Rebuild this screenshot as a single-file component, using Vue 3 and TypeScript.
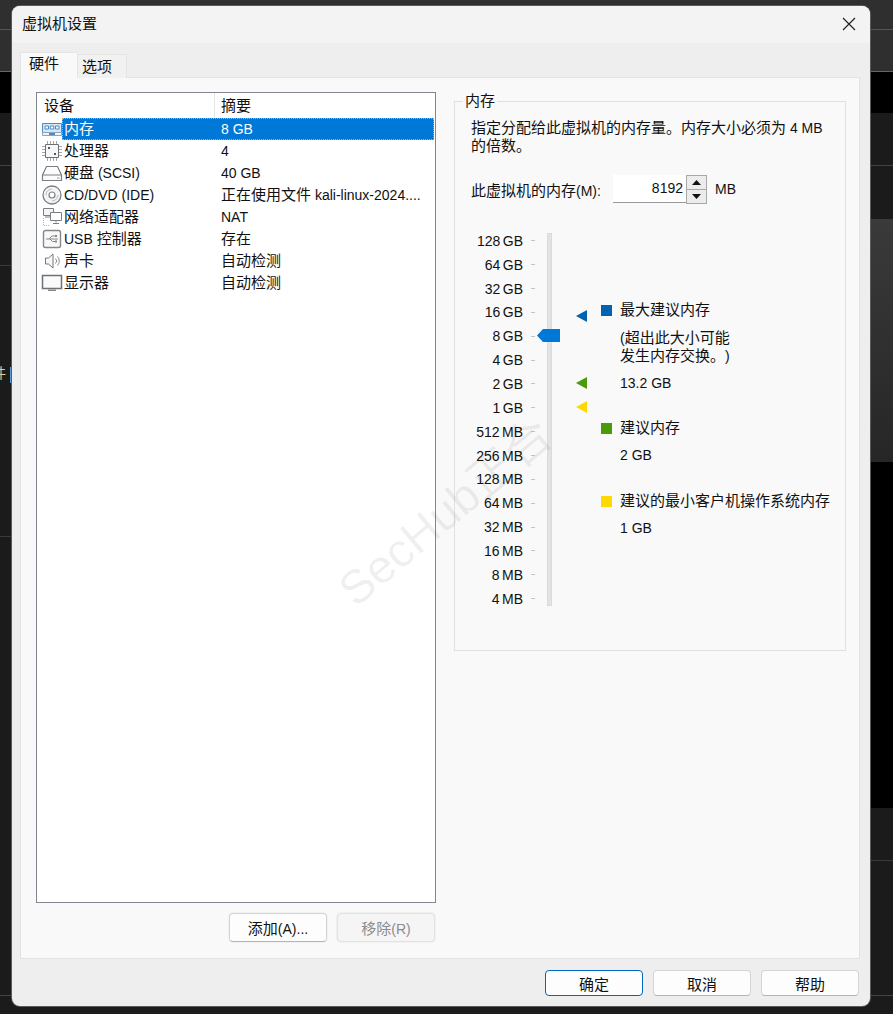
<script setup lang="ts">
import { h, type FunctionalComponent } from 'vue'

interface Shape { d: string; s?: string; f?: string; w?: number; dash?: string }
interface Device { name: string; summary: string; icon: Shape[] }

/* CJK runs are one pixel larger than the Latin runs around them, as in the native dialog font. */
const T: FunctionalComponent<{ t: string }> = (p) =>
  p.t.split(/([\u2e80-\u9fff\uff00-\uffef]+)/).filter(Boolean).map((run) =>
    /[\u2e80-\u9fff\uff00-\uffef]/.test(run) ? h('span', { class: 'cjk' }, run) : run
  )
T.props = ['t']

const g = '#7b7f83'
const devices: Device[] = [
  { name: '内存', summary: '8 GB', icon: [
    { d: 'M1.5 5.5h19v9h-19z', s: '#4f8cc4', f: '#d5e6f5' },
    { d: 'M4 8h3.5v3H4zM9.2 8h3.5v3H9.2zM14.5 8h3.5v3h-3.5z', s: '#4f8cc4', f: '#fff' },
    { d: 'M1.5 14.5h19v3h-19z', s: '#8aa6bd', f: '#eef3f7' },
    { d: 'M8 15h6v2H8z', f: '#4f8cc4' }
  ] },
  { name: '处理器', summary: '4', icon: [
    { d: 'M4.5 4.5h13v13h-13z', s: '#6d7073', f: '#f7f7f7' },
    { d: 'M1 6.5h3M1 9.5h3M1 12.5h3M1 15.5h3M18 6.5h3M18 9.5h3M18 12.5h3M18 15.5h3M6.5 1v3M9.5 1v3M12.5 1v3M15.5 1v3M6.5 18v3M9.5 18v3M12.5 18v3M15.5 18v3', s: '#a4a7aa' },
    { d: 'M7 7h2v2H7zM13 13h2v2h-2z', f: '#55585b' }
  ] },
  { name: '硬盘 (SCSI)', summary: '40 GB', icon: [
    { d: 'M5.5 4.5h11l4 8.500v5.500h-19V13z', s: g, f: '#fbfbfb', w: 1.2 },
    { d: 'M1.5 13h19', s: g, w: 1.2 },
    { d: 'M16 16h2.5', s: '#9a9da0' }
  ] },
  { name: 'CD/DVD (IDE)', summary: '正在使用文件 kali-linux-2024....', icon: [
    { d: 'M11 2a9 9 0 1 0 0 18a9 9 0 1 0 0-18z', s: g, f: '#f4f4f4', w: 1.3 },
    { d: 'M11 8a3 3 0 1 0 0 6a3 3 0 1 0 0-6z', s: g, f: '#fff', w: 1.2 },
    { d: 'M5 11a6 6 0 0 1 6-6', s: '#b9bcbf' },
    { d: 'M17 11a6 6 0 0 1-6 6', s: '#b9bcbf' }
  ] },
  { name: '网络适配器', summary: 'NAT', icon: [
    { d: 'M2.5 2.5h10v7h-10z', s: g, f: '#f5f5f5' },
    { d: 'M9.5 6.5h11v8h-11z', s: g, f: '#fff' },
    { d: 'M15 14.5v2M12 17.5h6', s: g },
    { d: 'M2.5 12v7.5H9', s: '#b2b5b8', dash: '1 1' },
    { d: 'M4 11h5', s: g }
  ] },
  { name: 'USB 控制器', summary: '存在', icon: [
    { d: 'M4.5 2.5h13a2 2 0 0 1 2 2v13a2 2 0 0 1-2 2h-13a2 2 0 0 1-2-2v-13a2 2 0 0 1 2-2z', s: '#85888b', f: '#f8f8f8', w: 1.4 },
    { d: 'M5 11h12M8 11l3-3h3M9 11l2.500 2.500H14', s: '#85888b' },
    { d: 'M14 7h2v2h-2zM14 12.500h2v2h-2z', f: '#85888b' }
  ] },
  { name: '声卡', summary: '自动检测', icon: [
    { d: 'M4.500 8h3l4.500-4v14l-4.500-4h-3z', s: '#75787b', f: '#f7f7f7' },
    { d: 'M14.500 8.500a3.500 3.500 0 0 1 0 5M16.500 6.500a6.500 6.500 0 0 1 0 9', s: '#8b8e91' }
  ] },
  { name: '显示器', summary: '自动检测', icon: [
    { d: 'M1.500 3.500h19v13h-19z', s: '#6f7275', f: '#fafafa', w: 1.5 },
    { d: 'M7 17.500h8v1.500H7z', f: '#85888b' }
  ] }
]

const scale = ['128 GB', '64 GB', '32 GB', '16 GB', '8 GB', '4 GB', '2 GB', '1 GB', '512 MB', '256 MB', '128 MB', '64 MB', '32 MB', '16 MB', '8 MB', '4 MB']
const marks = [
  { cls: 'mk-blue', color: '#0063b1' },
  { cls: 'mk-green', color: '#4a9a0a' },
  { cls: 'mk-yellow', color: '#ffd800' }
]
</script>

<template>
  <div class="screen">
    <span class="behind-text">件</span>
    <span class="behind-bar"></span>
    <div class="dialog">
      <header class="titlebar">
        <span class="title"><T t="虚拟机设置" /></span>
        <svg class="close" width="14" height="14" viewBox="0 0 14 14"><path d="M1 1l12 12M13 1L1 13" stroke="#222" stroke-width="1.2" fill="none" /></svg>
      </header>

      <div class="content">
        <div class="tabs">
          <div class="tab active"><T t="硬件" /></div>
          <div class="tab"><T t="选项" /></div>
        </div>
        <div class="panel">
          <div class="left">
            <div class="list">
              <div class="list-head">
                <div class="h1"><T t="设备" /></div>
                <div class="h2"><T t="摘要" /></div>
              </div>
              <div v-for="(d, i) in devices" :key="d.name" class="row">
                <svg class="icon" width="22" height="22" viewBox="0 0 22 22">
                  <path
                    v-for="(p, j) in d.icon"
                    :key="j"
                    :d="p.d"
                    :stroke="p.s || 'none'"
                    :fill="p.f || 'none'"
                    :stroke-width="p.w || 1"
                    :stroke-dasharray="p.dash"
                  />
                </svg>
                <div class="cells" :class="{ selected: i === 0 }">
                  <span class="c1"><T :t="d.name" /></span>
                  <span class="c2"><T :t="d.summary" /></span>
                </div>
              </div>
            </div>
            <div class="list-btns">
              <button class="btn halo"><T t="添加(A)..." /></button>
              <button class="btn disabled halo"><T t="移除(R)" /></button>
            </div>
          </div>

          <fieldset class="group">
            <legend><T t="内存" /></legend>
            <p class="desc"><T t="指定分配给此虚拟机的内存量。内存大小必须为 4 MB" /><br /><T t="的倍数。" /></p>
            <div class="spin-row">
              <span class="spin-label"><T t="此虚拟机的内存(M):" /></span>
              <div class="spin-input">8192</div>
              <div class="spin-btns">
                <div class="spin-btn"><svg width="9" height="5" viewBox="0 0 9 5"><path d="M4.500 0L9 5H0z" fill="#111" /></svg></div>
                <div class="spin-btn"><svg width="9" height="5" viewBox="0 0 9 5"><path d="M4.500 5L0 0h9z" fill="#111" /></svg></div>
              </div>
              <span class="spin-unit">MB</span>
            </div>

            <div class="slider">
              <div class="scale">
                <div v-for="s in scale" :key="s" class="tick-row">
                  <span class="tick-label">{{ s }}</span>
                  <span class="tick"></span>
                </div>
              </div>
              <div class="track"></div>
              <svg class="thumb" width="23" height="13" viewBox="0 0 23 13"><path d="M0 6.500L6 0h17v13H6z" fill="#0078d7" /></svg>
              <svg v-for="m in marks" :key="m.cls" class="mark" :class="m.cls" width="11" height="12" viewBox="0 0 11 12"><path d="M0 6L11 0v12z" :fill="m.color" /></svg>

              <div class="legend">
                <div class="lg-title"><i class="sq sq-blue"></i><T t="最大建议内存" /></div>
                <p class="lg-note"><T t="(超出此大小可能" /><br /><T t="发生内存交换。)" /></p>
                <p class="lg-val">13.2 GB</p>
                <div class="lg-title next"><i class="sq sq-green"></i><T t="建议内存" /></div>
                <p class="lg-val">2 GB</p>
                <div class="lg-title next last"><i class="sq sq-yellow"></i><T t="建议的最小客户机操作系统内存" /></div>
                <p class="lg-val">1 GB</p>
              </div>
            </div>
          </fieldset>
        </div>
      </div>

      <footer class="footer">
        <button class="btn foot primary"><T t="确定" /></button>
        <button class="btn foot"><T t="取消" /></button>
        <button class="btn foot"><T t="帮助" /></button>
      </footer>
    </div>
    <div class="watermark">SecHub正合</div>
  </div>
</template>

<style>
html, body { margin: 0; background: #1b1b1b; }
.cjk { font-size: 15px; }
</style>

<style scoped>
.screen {
  position: relative;
  width: 893px;
  height: 1014px;
  overflow: hidden;
  box-sizing: border-box;
  padding: 6px 0 0 12px;
  font-family: "Liberation Sans", "Noto Sans CJK SC", sans-serif;
  font-size: 14px;
  color: #111;
  text-spacing-trim: space-all;
  background:
    linear-gradient(#555, #555) 0 29px / 100% 1px no-repeat,
    linear-gradient(#666, #666) 0 71px / 100% 1px no-repeat,
    linear-gradient(#000, #000) 0 72px / 100% 41px no-repeat,
    linear-gradient(#2f2f2f, #2f2f2f) 0 0 / 100% 72px no-repeat,
    linear-gradient(#444, #444) 0 165px / 100% 1px no-repeat,
    linear-gradient(#3a3a3a, #3a3a3a) 0 265px / 12px 1px no-repeat,
    linear-gradient(#3a3a3a, #3a3a3a) 0 536px / 12px 1px no-repeat,
    linear-gradient(#3a3a3a, #262626) 870px 219px / 23px 243px no-repeat,
    linear-gradient(#000, #000) 870px 462px / 23px 346px no-repeat,
    linear-gradient(#3a3a3a, #3a3a3a) 870px 860px / 23px 1px no-repeat,
    linear-gradient(#444, #444) 0 995px / 100% 1px no-repeat,
    #1b1b1b;
}
.behind-text {
  position: absolute;
  left: -8px;
  top: 362px;
  color: #f0c890;
}
.behind-bar {
  position: absolute;
  left: 10px;
  top: 367px;
  width: 2px;
  height: 16px;
  background: #5b9bd5;
}
.dialog {
  position: relative;
  width: 858px;
  height: 1000px;
  display: flex;
  flex-direction: column;
  background: #eeeeee;
  border-radius: 8px;
  overflow: hidden;
  box-shadow: 0 0 0 1px #5a5a5a;
}
.titlebar {
  height: 37px;
  flex: none;
  display: flex;
  align-items: center;
  justify-content: space-between;
  box-sizing: border-box;
  padding: 0 14px 1px 10px;
  background: #f3f3f3;
}
.title { line-height: 20px; }
.content {
  flex: none;
  padding: 9px 10px 0 8px;
}
.tabs {
  display: flex;
  align-items: flex-end;
  height: 26px;
  position: relative;
  z-index: 1;
}
.tab {
  width: 50px;
  height: 24px;
  box-sizing: border-box;
  padding: 1px 0 0 4px;
  line-height: 22px;
  background: #f1f1f1;
  border: 1px solid #e4e4e4;
  border-bottom: none;
}
.tab.active {
  width: 57px;
  height: 26px;
  padding: 0 0 0 8px;
  background: #f9f9f9;
  border-right: none;
}
.panel {
  box-sizing: border-box;
  margin-top: -1px;
  width: 840px;
  height: 882px;
  display: flex;
  padding: 13px 13px 0 15px;
  background: #f9f9f9;
  border: 1px solid #e3e3e3;
}
.left {
  width: 400px;
  margin-top: 1px;
  flex: none;
}
.list {
  box-sizing: border-box;
  height: 811px;
  background: #fff;
  border: 1px solid #82878f;
}
.list-head {
  display: flex;
  height: 25px;
  line-height: 26px;
}
.h1 {
  box-sizing: border-box;
  width: 178px;
  padding-left: 7px;
  border-right: 1px solid #e5e5e5;
}
.h2 { padding-left: 6px; }
.row {
  display: flex;
  height: 22px;
  line-height: 22px;
  padding-left: 4px;
}
.icon { flex: none; margin-right: -1px; }
.cells {
  flex: 1;
  display: flex;
  margin-right: 1px;
  white-space: nowrap;
}
.cells.selected {
  background: #0078d7;
  color: #fff;
  outline: 1px dotted #f2a33c;
  outline-offset: -1px;
}
.c1 {
  width: 159px;
  box-sizing: border-box;
  padding-left: 2px;
  flex: none;
}
.c2 { width: 210px; overflow: hidden; }
.list-btns {
  display: flex;
  justify-content: flex-end;
  gap: 10px;
  margin-top: 10px;
  padding-right: 1px;
}
.btn {
  box-sizing: border-box;
  width: 98px;
  padding: 0;
  font: inherit;
  color: #111;
  background: #fdfdfd;
  border: 1px solid #d4d4d4;
  border-bottom-color: #b5b5b5;
  border-radius: 4px;
}
.halo {
  height: 29px;
  box-shadow: 0 0 0 1px #f1f1f1;
}
.disabled {
  color: #8c8c8c;
  background: #f5f5f5;
  border-color: #e2e2e2;
}
.group {
  box-sizing: border-box;
  margin: 0 0 0 18px;
  padding: 0 0 0 16px;
  width: 392px;
  height: 560px;
  border: 1px solid #e0e0e0;
  min-width: 0;
}
legend {
  margin-left: -8px;
  padding: 0 2px;
  line-height: 20px;
}
.desc {
  margin: 8px 0 0;
  line-height: 18px;
  white-space: nowrap;
}
.spin-row {
  display: flex;
  align-items: center;
  height: 28px;
  margin-top: 20px;
}
.spin-label { width: 142px; flex: none; }
.spin-input {
  box-sizing: border-box;
  width: 73px;
  height: 28px;
  padding-right: 3px;
  line-height: 27px;
  text-align: right;
  background: #fff;
  border-bottom: 1px solid #9a9a9a;
}
.spin-btns {
  box-sizing: border-box;
  width: 21px;
  height: 29px;
  padding: 1px;
  display: flex;
  flex-direction: column;
  gap: 1px;
  background: #a8a8a8;
}
.spin-btn {
  flex: 1;
  display: flex;
  align-items: center;
  justify-content: center;
  background: #ececec;
}
.spin-unit { margin-left: 8px; }
.slider {
  position: relative;
  display: flex;
  align-items: flex-start;
  margin-top: 26px;
}
.scale { width: 64px; flex: none; }
.tick-row {
  display: flex;
  align-items: center;
  height: 23.85px;
}
.tick-label {
  width: 52px;
  text-align: right;
  white-space: nowrap;
  word-spacing: -1.5px;
}
.tick {
  width: 4px;
  height: 1px;
  margin-left: 8px;
  background: #c4c4c4;
}
.track {
  box-sizing: border-box;
  flex: none;
  width: 5px;
  height: 373px;
  margin: 4px 0 0 12px;
  background: #e2e4e4;
  border: 1px solid #dadcdc;
}
.thumb {
  position: absolute;
  left: 66px;
  top: 100px;
}
.mark { position: absolute; left: 105px; }
.mk-blue { top: 81px; }
.mk-green { top: 148px; }
.mk-yellow { top: 172px; }
.legend {
  margin: 72px 0 0 49px;
  line-height: 18px;
  white-space: nowrap;
}
.lg-title {
  display: flex;
  align-items: center;
}
.lg-title.next { margin-top: 27px; }
.lg-title.last { margin-top: 28px; }
.sq {
  width: 11px;
  height: 11px;
  margin-right: 8px;
  flex: none;
}
.sq-blue { background: #0063b1; }
.sq-green { background: #4a9a0a; }
.sq-yellow { background: #ffd800; }
.lg-note, .lg-val { margin: 0 0 0 19px; }
.lg-note { margin-top: 10px; }
.lg-val { margin-top: 9px; }
.footer {
  flex: none;
  display: flex;
  justify-content: flex-end;
  gap: 10px;
  padding: 11px 11px 0 0;
}
.foot { height: 26px; }
.primary {
  border-color: #0067c0;
}
.watermark {
  position: absolute;
  left: 312px;
  top: 474px;
  font-size: 47px;
  white-space: nowrap;
  color: rgba(0, 0, 0, 0.065);
  transform: rotate(-40deg);
  pointer-events: none;
}
</style>
